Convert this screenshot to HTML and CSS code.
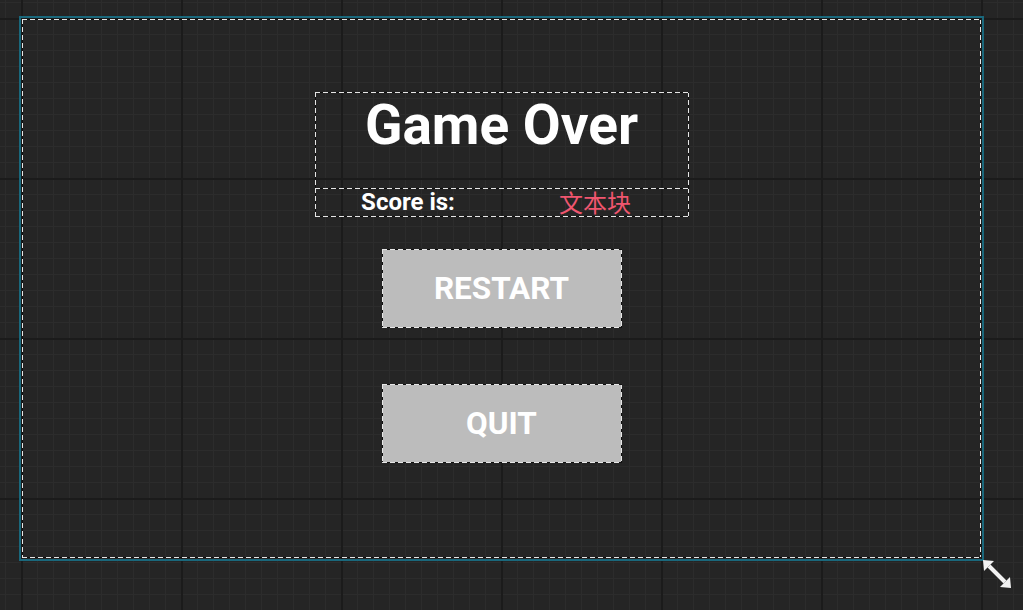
FILE: index.html
```html
<!DOCTYPE html>
<html lang="en">
<head>
<meta charset="utf-8">
<title>Game Over</title>
<link rel="stylesheet" href="styles.css">
</head>
<body>
<div class="stage">
  <div class="canvas dash">
    <div class="panel">
      <div class="title dash">Game Over</div>
      <div class="score-row dash">
        <div class="score-cell"><span class="score-label">Score is:</span></div>
        <div class="score-cell"><span class="score-value">文本块</span></div>
      </div>
    </div>
    <div class="btn dash">RESTART</div>
    <div class="btn btn-quit dash">QUIT</div>
    <svg class="resize" width="30" height="30" viewBox="0 0 30 30" aria-hidden="true">
      <polygon points="0,0 11,1 1,11" fill="#f2f2f2"/>
      <line x1="6" y1="6" x2="22" y2="22" stroke="#f2f2f2" stroke-width="4"/>
      <polygon points="28,28 17,27 27,17" fill="#f2f2f2"/>
    </svg>
  </div>
</div>
</body>
</html>
```

FILE: styles.css
```css
html, body {
  margin: 0;
  padding: 0;
}

body {
  width: 1023px;
  height: 610px;
  overflow: hidden;
  background-color: #252525;
  background-image:
    linear-gradient(90deg, #1b1b1b 2px, transparent 2px),
    linear-gradient(180deg, #1b1b1b 2px, transparent 2px),
    linear-gradient(90deg, #2c2c2c 1px, transparent 1px),
    linear-gradient(180deg, #2c2c2c 1px, transparent 1px);
  background-size: 160px 160px, 160px 160px, 16px 16px, 16px 16px;
  background-position: 21px 18px, 21px 18px, 5px 2px, 5px 2px;
  font-family: Roboto, "Liberation Sans", sans-serif;
}

.stage {
  padding: 16px 0 0 19px;
}

.canvas {
  position: relative;
  box-sizing: border-box;
  width: 965px;
  height: 545px;
  border: 2px solid #1a687c;
  display: flex;
  flex-direction: column;
  align-items: center;
}

.dash {
  position: relative;
}

.dash::after {
  content: "";
  position: absolute;
  inset: 0;
  pointer-events: none;
  background:
    repeating-linear-gradient(90deg, #e6e6e6 0 5px, #111 5px 8px) top left / 100% 1px no-repeat,
    repeating-linear-gradient(90deg, #e6e6e6 0 5px, #111 5px 8px) bottom left / 100% 1px no-repeat,
    repeating-linear-gradient(180deg, #e6e6e6 0 5px, #111 5px 8px) top left / 1px 100% no-repeat,
    repeating-linear-gradient(180deg, #e6e6e6 0 5px, #111 5px 8px) top right / 1px 100% no-repeat;
}

.canvas.dash::after {
  inset: 1px;
}

.panel {
  margin-top: 74px;
  width: 374px;
  display: flex;
  flex-direction: column;
}

.title {
  height: 97px;
  box-sizing: border-box;
  color: #fff;
  font-weight: 700;
  font-size: 55px;
  line-height: 66px;
  text-align: center;
}

.score-row {
  margin-top: -1px;
  height: 29px;
  box-sizing: border-box;
  display: flex;
}

.score-cell {
  flex: 1;
  display: flex;
  justify-content: center;
}

.score-label {
  color: #fff;
  font-weight: 700;
  font-size: 24px;
  line-height: 28px;
}

.score-value {
  color: #f0566f;
  font-family: "Noto Sans CJK SC", sans-serif;
  font-size: 24px;
  line-height: 28px;
}

.btn {
  margin-top: 32px;
  width: 240px;
  height: 79px;
  box-sizing: border-box;
  background: #bcbcbc;
  color: #fff;
  font-weight: 700;
  font-size: 31.5px;
  display: flex;
  align-items: center;
  justify-content: center;
}

.btn-quit {
  margin-top: 56px;
}

.resize {
  position: absolute;
  left: 100%;
  top: 100%;
  margin-left: 1px;
  margin-top: 1px;
}
```
